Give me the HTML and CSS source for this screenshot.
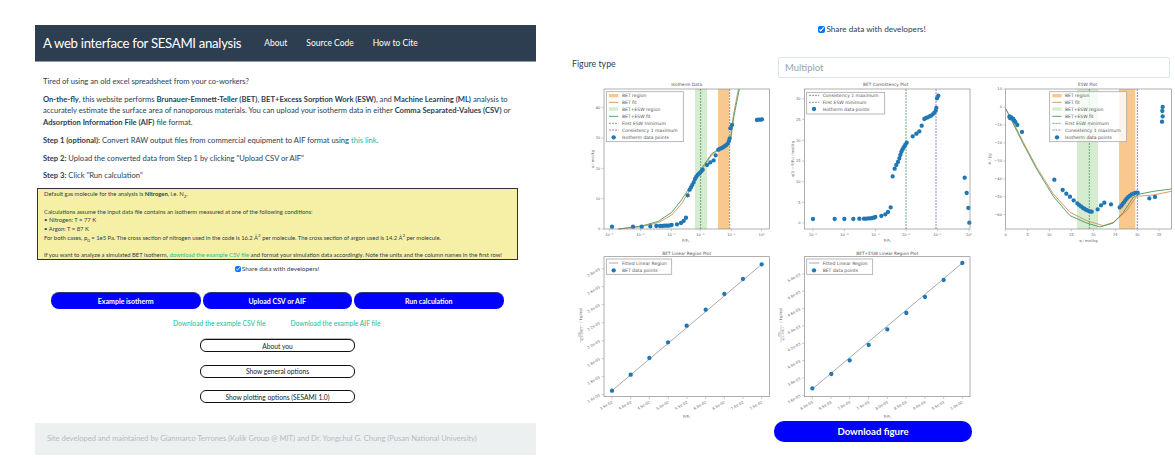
FILE: index.html

```html
<!DOCTYPE html>
<html>
<head>
  <meta charset="utf-8">
  <title>SESAMI</title>
  <link rel="stylesheet" href="styles.css">
</head>
<body>
  <div class="left">
    <div class="navbar">
      <span class="brand">A web interface for SESAMI analysis</span>
      <a class="navlink">About</a>
      <a class="navlink">Source Code</a>
      <a class="navlink">How to Cite</a>
    </div>

    <div class="intro">
      <p>Tired of using an old excel spreadsheet from your co-workers?</p>
      <p><b>On-the-fly</b>, this website performs <b>Brunauer-Emmett-Teller (BET)</b>, <b>BET+Excess Sorption Work (ESW)</b>, and <b>Machine Learning (ML)</b> analysis to accurately estimate the surface area of nanoporous materials. You can upload your isotherm data in either <b>Comma Separated-Values (CSV)</b> or <b>Adsorption Information File (AIF)</b> file format.</p>
      <p><b>Step 1 (optional):</b> Convert RAW output files from commercial equipment to AIF format using <a class="link">this link</a>.</p>
      <p><b>Step 2:</b> Upload the converted data from Step 1 by clicking "Upload CSV or AIF"</p>
      <p><b>Step 3:</b> Click "Run calculation"</p>
    </div>

    <div class="notice">
      Default gas molecule for the analysis is <b>Nitrogen</b>, i.e. N<sub>2</sub>.<br><br>
      Calculations assume the input data file contains an isotherm measured at one of the following conditions:<br>
      &bull; Nitrogen: T = 77 K<br>
      &bull; Argon: T = 87 K<br>
      For both cases, p<sub>0</sub> = 1e5 Pa. The cross section of nitrogen used in the code is 16.2 Å<sup>2</sup> per molecule. The cross section of argon used is 14.2 Å<sup>2</sup> per molecule.<br><br>
      If you want to analyze a simulated BET isotherm, <a class="link">download the example CSV file</a> and format your simulation data accordingly. Note the units and the column names in the first row!
    </div>

    <label class="share"><input type="checkbox" checked> Share data with developers!</label>

    <div class="actions">
      <button class="blue">Example isotherm</button>
      <button class="blue">Upload CSV or AIF</button>
      <button class="blue">Run calculation</button>
    </div>

    <div class="downloads">
      <a class="link">Download the example CSV file</a>
      <a class="link">Download the example AIF file</a>
    </div>

    <div class="options">
      <button class="outline first">About you</button>
      <button class="outline">Show general options</button>
      <button class="outline">Show plotting options (SESAMI 1.0)</button>
    </div>

    <div class="footer">Site developed and maintained by Gianmarco Terrones (Kulik Group @ MIT) and Dr. Yongchul G. Chung (Pusan National University)</div>
  </div>

  <div class="right">
    <label class="share top"><input type="checkbox" checked> Share data with developers!</label>

    <div class="figtype">
      <span class="figlabel">Figure type</span>
      <div class="select">Multiplot</div>
    </div>

    <div class="plots">
      <!-- isotherm -->
      <svg class="plot" viewBox="0 0 615 510">
        <rect class="r-or" x="459" y="30" width="33" height="420"/>
        <rect class="r-gr" x="390" y="30" width="36" height="420"/>
        <path class="v-gr" d="M407 30V450"/>
        <path class="v-pu" d="M494 30V450"/>
        <polyline class="c-or" points="160,450 230,443 280,431 320,408 350,374 380,324 410,274 440,228 470,207 495,186 505,110 520,30"/>
        <polyline class="c-gr" points="160,450 230,441 280,427 320,400 350,362 380,316 410,268 440,224 470,205 497,182 507,110 523,30"/>
        <path class="dots" d="M141 443h0M204 443h0M230 443h0M256 442h0M274 441h0M285 441h0M292 441h0M298 440h0M304 440h0M310 440h0M315 439h0M320 438h0M336 436h0M348 432h0M356 426h0M363 416h0M368 349h0M374 332h0M378 325h0M382 318h0M386 310h0M390 300h0M394 293h0M398 288h0M402 284h0M406 280h0M410 276h0M413 272h0M426 258h0M436 250h0M446 244h0M452 229h0M460 212h0M464 210h0M468 208h0M472 206h0M476 204h0M480 201h0M484 198h0M488 194h0M492 186h0M494 178h0M496 148h0M501 138h0M576 123h0M580 122h0M584 122h0M588 122h0M591 121h0"/>
        <rect class="frame" x="117" y="30" width="496" height="420"/>
        <path class="tick" d="M110 450h7M110 359h7M110 268h7M110 177h7M110 86h7M133 450v7M226 450v7M319 450v7M406 450v7M499 450v7M590 450v7"/>
        <g class="lab end"><text x="106" y="454">0</text><text x="106" y="363">10</text><text x="106" y="272">20</text><text x="106" y="181">30</text><text x="106" y="90">40</text></g>
        <g class="lab mid"><text x="133" y="471">10⁻⁵</text><text x="226" y="471">10⁻⁴</text><text x="319" y="471">10⁻³</text><text x="406" y="471">10⁻²</text><text x="499" y="471">10⁻¹</text><text x="590" y="471">10⁰</text></g>
        <text class="lab mid" x="362" y="490">P/P₀</text>
        <text class="lab mid" transform="translate(86 240) rotate(-90)">q / mol/kg</text>
        <text class="ttl" x="365" y="22">Isotherm Data</text>
        <rect class="legend" x="124" y="38" width="231" height="150"/>
        <rect class="r-or" x="132" y="45" width="28" height="10"/>
        <path class="c-or" d="M132 70h28"/>
        <rect class="r-gr" x="132" y="85" width="28" height="10"/>
        <path class="c-gr" d="M132 112h28"/>
        <path class="v-gr" d="M132 133h28"/>
        <path class="v-pu" d="M132 153h28"/>
        <path class="dots" d="M146 175h0"/>
        <g class="leg"><text x="171" y="54">BET region</text><text x="171" y="75">BET fit</text><text x="171" y="95">BET+ESW region</text><text x="171" y="116">BET+ESW fit</text><text x="171" y="137">First ESW minimum</text><text x="171" y="158">Consistency 1 maximum</text><text x="171" y="180">Isotherm data points</text></g>
      </svg>

      <!-- consistency -->
      <svg class="plot" viewBox="0 0 615 510">
        <path class="v-gr" d="M408 30V450"/>
        <path class="v-pu" d="M498 30V450"/>
        <path class="dots" d="M129 420h0M194 420h0M223 420h0M250 420h0M268 419h0M282 419h0M289 419h0M295 418h0M301 418h0M307 417h0M312 416h0M316 414h0M334 411h0M346 406h0M354 399h0M362 385h0M368 292h0M374 269h0M379 258h0M384 249h0M388 238h0M391 228h0M394 219h0M397 212h0M400 207h0M403 202h0M406 197h0M410 191h0M428 172h0M439 164h0M448 157h0M455 140h0M463 120h0M468 117h0M473 115h0M478 112h0M483 110h0M488 106h0M493 101h0M497 95h0M499 87h0M501 58h0M505 50h0M584 296h0M590 342h0M595 387h0M598 431h0"/>
        <rect class="frame" x="103" y="30" width="497" height="420"/>
        <path class="tick" d="M96 432h7M96 370h7M96 308h7M96 246h7M96 184h7M96 121h7M96 59h7M129 450v7M223 450v7M316 450v7M408 450v7M502 450v7M597 450v7"/>
        <g class="lab end"><text x="92" y="436">0</text><text x="92" y="374">5</text><text x="92" y="312">10</text><text x="92" y="250">15</text><text x="92" y="188">20</text><text x="92" y="125">25</text><text x="92" y="63">30</text></g>
        <g class="lab mid"><text x="129" y="471">10⁻⁵</text><text x="223" y="471">10⁻⁴</text><text x="316" y="471">10⁻³</text><text x="408" y="471">10⁻²</text><text x="502" y="471">10⁻¹</text><text x="597" y="471">10⁰</text></g>
        <text class="lab mid" x="352" y="490">P/P₀</text>
        <text class="lab mid" transform="translate(72 240) rotate(-90)">q(1 − P/P₀) / mol/kg</text>
        <text class="ttl" x="347" y="22">BET Consistency Plot</text>
        <rect class="legend" x="110" y="40" width="234" height="65"/>
        <path class="v-pu" d="M117 49h31"/>
        <path class="v-gr" d="M117 70h31"/>
        <path class="dots" d="M132 90h0"/>
        <g class="leg"><text x="158" y="54">Consistency 1 maximum</text><text x="158" y="75">First ESW minimum</text><text x="158" y="95">Isotherm data points</text></g>
      </svg>

      <!-- esw -->
      <svg class="plot" viewBox="15 0 600 510">
        <rect class="r-or" x="447" y="30" width="49" height="420"/>
        <rect class="r-gr" x="321" y="30" width="63" height="420"/>
        <path class="v-gr" d="M358 30V450"/>
        <path class="v-pu" d="M502 30V450"/>
        <polyline class="c-or" points="107,90 130,130 160,190 200,265 250,345 300,400 350,425 400,440 430,430 470,395 500,352 550,348 604,337"/>
        <polyline class="c-gr" points="107,88 130,135 160,195 200,270 250,352 300,410 350,432 390,444 430,432 460,400 490,355 510,345 550,337 604,330"/>
        <path class="dots" d="M118 113h0M119 116h0M120 113h0M122 118h0M124 115h0M127 118h0M130 120h0M133 125h0M136 129h0M142 138h0M156 159h0M253 302h0M278 333h0M289 344h0M300 353h0M311 364h0M322 373h0M327 378h0M333 382h0M338 386h0M343 389h0M348 392h0M352 394h0M356 396h0M360 397h0M365 398h0M383 391h0M393 379h0M403 371h0M423 376h0M449 385h0M454 380h0M458 375h0M462 370h0M466 364h0M470 359h0M475 354h0M480 350h0M485 346h0M490 344h0M495 342h0M500 341h0M503 341h0M538 358h0M555 354h0M576 128h0M578 112h0M577 96h0M578 84h0"/>
        <rect class="frame" x="107" y="30" width="497" height="420"/>
        <path class="tick" d="M100 30h7M100 84h7M100 138h7M100 192h7M100 246h7M100 300h7M100 353h7M100 407h7M107 450v7M173 450v7M238 450v7M304 450v7M370 450v7M436 450v7M502 450v7M567 450v7"/>
        <g class="lab end"><text x="96" y="34">10</text><text x="96" y="88">0</text><text x="96" y="142">−10</text><text x="96" y="196">−20</text><text x="96" y="250">−30</text><text x="96" y="304">−40</text><text x="96" y="357">−50</text><text x="96" y="411">−60</text></g>
        <g class="lab mid"><text x="107" y="471">0</text><text x="173" y="471">5</text><text x="238" y="471">10</text><text x="304" y="471">15</text><text x="370" y="471">20</text><text x="436" y="471">25</text><text x="502" y="471">30</text><text x="567" y="471">35</text></g>
        <text class="lab mid" x="355" y="488">q / mol/kg</text>
        <text class="lab mid" transform="translate(62 240) rotate(-90)">Φ / J/g</text>
        <text class="ttl" x="353" y="22">ESW Plot</text>
        <rect class="legend" x="239" y="38" width="231" height="150"/>
        <rect class="r-or" x="247" y="45" width="28" height="10"/>
        <path class="c-or" d="M247 70h28"/>
        <rect class="r-gr" x="247" y="85" width="28" height="10"/>
        <path class="c-gr" d="M247 112h28"/>
        <path class="v-gr" d="M247 133h28"/>
        <path class="v-pu" d="M247 153h28"/>
        <path class="dots" d="M261 175h0"/>
        <g class="leg"><text x="285" y="54">BET region</text><text x="285" y="75">BET fit</text><text x="285" y="95">BET+ESW region</text><text x="285" y="116">BET+ESW fit</text><text x="285" y="137">First ESW minimum</text><text x="285" y="158">Consistency 1 maximum</text><text x="285" y="180">Isotherm data points</text></g>
      </svg>

      <!-- bet linear -->
      <svg class="plot" viewBox="0 -15 615 516">
        <path class="fit" d="M141 410L590 31"/>
        <path class="dots" d="M141 410h0M197 362h0M253 312h0M309 265h0M365 215h0M422 167h0M478 120h0M534 75h0M590 31h0"/>
        <rect class="frame" x="117" y="8" width="496" height="420"/>
        <path class="tick" d="M110 422h7M110 368h7M110 314h7M110 260h7M110 206h7M110 152h7M110 98h7M110 44h7M141 428v7M197 428v7M253 428v7M310 428v7M366 428v7M422 428v7M478 428v7M534 428v7M590 428v7"/>
        <g class="lab end">
          <text transform="translate(106 426) rotate(-30)">1.4e-03</text><text transform="translate(106 372) rotate(-30)">1.6e-03</text><text transform="translate(106 318) rotate(-30)">1.8e-03</text><text transform="translate(106 264) rotate(-30)">2.0e-03</text><text transform="translate(106 210) rotate(-30)">2.2e-03</text><text transform="translate(106 156) rotate(-30)">2.4e-03</text><text transform="translate(106 102) rotate(-30)">2.6e-03</text><text transform="translate(106 48) rotate(-30)">2.8e-03</text>
          <text transform="translate(144 447) rotate(-30)">3.5e-02</text><text transform="translate(200 447) rotate(-30)">4.0e-02</text><text transform="translate(256 447) rotate(-30)">4.5e-02</text><text transform="translate(313 447) rotate(-30)">5.0e-02</text><text transform="translate(369 447) rotate(-30)">5.5e-02</text><text transform="translate(425 447) rotate(-30)">6.0e-02</text><text transform="translate(481 447) rotate(-30)">6.5e-02</text><text transform="translate(537 447) rotate(-30)">7.0e-02</text><text transform="translate(593 447) rotate(-30)">7.5e-02</text>
        </g>
        <text class="lab mid" x="365" y="491">P/P₀</text>
        <g class="lab" transform="translate(47 240) rotate(-90)">
          <text class="frac mid" y="-3">P/P₀</text>
          <path class="tick" d="M-26 0h52"/>
          <text class="frac mid" y="8">q(1−P/P₀)</text>
          <text x="34" y="3">/ kg/mol</text>
        </g>
        <text class="ttl" x="365" y="2">BET Linear Region Plot</text>
        <rect class="legend" x="124" y="15" width="196" height="46"/>
        <path class="fit" d="M132 27h28"/>
        <path class="dots" d="M146 49h0"/>
        <g class="leg"><text x="171" y="32">Fitted Linear Region</text><text x="171" y="54">BET data points</text></g>
      </svg>

      <!-- bet+esw linear -->
      <svg class="plot" viewBox="0 -15 615 516">
        <path class="fit" d="M127 405L577 27"/>
        <path class="dots" d="M127 403h0M184 360h0M239 319h0M296 273h0M352 226h0M409 177h0M465 129h0M521 78h0M577 27h0"/>
        <rect class="frame" x="103" y="8" width="497" height="420"/>
        <path class="tick" d="M96 424h7M96 372h7M96 320h7M96 268h7M96 216h7M96 164h7M96 112h7M96 60h7M127 428v7M183 428v7M239 428v7M296 428v7M352 428v7M408 428v7M465 428v7M521 428v7M577 428v7"/>
        <g class="lab end">
          <text transform="translate(92 428) rotate(-30)">3.6e-03</text><text transform="translate(92 376) rotate(-30)">3.8e-03</text><text transform="translate(92 324) rotate(-30)">4.0e-03</text><text transform="translate(92 272) rotate(-30)">4.2e-03</text><text transform="translate(92 220) rotate(-30)">4.4e-03</text><text transform="translate(92 168) rotate(-30)">4.6e-03</text><text transform="translate(92 116) rotate(-30)">4.8e-03</text><text transform="translate(92 64) rotate(-30)">5.0e-03</text>
          <text transform="translate(130 447) rotate(-30)">6.0e-03</text><text transform="translate(186 447) rotate(-30)">6.5e-03</text><text transform="translate(242 447) rotate(-30)">7.0e-03</text><text transform="translate(299 447) rotate(-30)">7.5e-03</text><text transform="translate(355 447) rotate(-30)">8.0e-03</text><text transform="translate(411 447) rotate(-30)">8.5e-03</text><text transform="translate(468 447) rotate(-30)">9.0e-03</text><text transform="translate(524 447) rotate(-30)">9.5e-03</text><text transform="translate(580 447) rotate(-30)">1.0e-02</text>
        </g>
        <text class="lab mid" x="352" y="491">P/P₀</text>
        <g class="lab" transform="translate(33 240) rotate(-90)">
          <text class="frac mid" y="-3">P/P₀</text>
          <path class="tick" d="M-26 0h52"/>
          <text class="frac mid" y="8">q(1−P/P₀)</text>
          <text x="34" y="3">/ kg/mol</text>
        </g>
        <text class="ttl" x="352" y="2">BET+ESW Linear Region Plot</text>
        <rect class="legend" x="110" y="15" width="198" height="46"/>
        <path class="fit" d="M117 27h31"/>
        <path class="dots" d="M132 49h0"/>
        <g class="leg"><text x="158" y="32">Fitted Linear Region</text><text x="158" y="54">BET data points</text></g>
      </svg>

      <button class="download">Download figure</button>
    </div>
  </div>
</body>
</html>
```

FILE: styles.css

```css
html, body {
  margin: 0;
  padding: 0;
  height: 100%;
}
body {
  display: flex;
  background-color: #fff;
  color: #2c3e50;
  font-family: Lato, "Open Sans", sans-serif;
  overflow: hidden;
}
a {
  text-decoration: none;
}
.link {
  color: #18bc9c;
}

/* left column */
.left {
  width: 501px;
  margin-left: 35px;
  padding-top: 25px;
}
.navbar {
  display: flex;
  align-items: center;
  height: 36px;
  padding-left: 8px;
  background-color: #2c3e50;
  border-bottom: 1px solid #8d99a6;
  color: #fff;
}
.brand {
  font-size: 13.2px;
  letter-spacing: -0.3px;
  margin-right: 23px;
}
.navlink {
  font-size: 8.5px;
  margin-right: 19px;
}
.intro {
  padding: 14px 20px 0 8px;
  font-size: 7.6px;
  line-height: 11.6px;
}
.intro p {
  margin: 0 0 6.2px;
}
.notice {
  width: 473px;
  height: 69px;
  margin: 6px 0 0 2px;
  padding: 1px 0 0 6px;
  background-color: #f6efa6;
  border: 1px solid #333;
  font-size: 5.85px;
  line-height: 8.7px;
  white-space: nowrap;
  overflow: hidden;
}
.notice sub, .notice sup {
  font-size: 4.5px;
  line-height: 0;
}
.share {
  display: flex;
  align-items: center;
  justify-content: center;
  gap: 1px;
  width: 480px;
  margin: 3px 0 0 2px;
  font-size: 6.4px;
  line-height: 12px;
}
.share input {
  width: 6px;
  height: 6px;
  margin: 0;
}
.actions {
  display: flex;
  gap: 2px;
  margin: 17px 0 0 16px;
}
.blue {
  width: 149.5px;
  height: 17px;
  padding: 0;
  background-color: #00f;
  border: 0;
  border-top: 1px solid #333a66;
  border-radius: 8px;
  color: #fff;
  font-family: inherit;
  font-size: 7px;
  font-weight: bold;
}
.downloads {
  display: flex;
  gap: 25px;
  margin: 8px 0 0 138px;
  font-size: 6.7px;
  line-height: 12px;
}
.options {
  display: flex;
  flex-direction: column;
  gap: 12.5px;
  margin: 10px 0 0 165px;
}
.outline {
  width: 155px;
  height: 13px;
  padding: 0;
  background-color: #fff;
  border: 1px solid #111;
  border-radius: 6px;
  color: #222;
  font-family: inherit;
  font-size: 6.7px;
}
.outline.first {
  box-shadow: 0 -1px 0 #bbb;
}
.footer {
  height: 32px;
  margin-top: 20px;
  padding-left: 12px;
  background-color: #ecf0f1;
  color: #b4bcc2;
  font-size: 7.55px;
  line-height: 32px;
  white-space: nowrap;
}

/* right column */
.right {
  width: 610px;
  margin-left: 29px;
}
.share.top {
  width: 100%;
  margin: 23px 0 0 2px;
  font-size: 8.2px;
}
.share.top input {
  width: 7px;
  height: 7px;
}
.figtype {
  display: flex;
  align-items: flex-start;
  margin-top: 22px;
  padding-left: 7px;
}
.figlabel {
  width: 206px;
  font-size: 8.8px;
  line-height: 14px;
}
.select {
  width: 384px;
  height: 19px;
  padding-left: 6px;
  border: 1px solid #dce4ec;
  border-radius: 2px;
  color: #95a5a6;
  font-size: 9.5px;
  line-height: 19px;
}
.plots {
  display: grid;
  grid-template-columns: 205px 205px 200px;
  grid-template-rows: 170px 172px auto;
  margin-top: 1px;
}
.plot {
  display: block;
  width: 100%;
  height: 100%;
}
.download {
  grid-column: 2;
  width: 198px;
  height: 21px;
  margin-left: 4px;
  padding: 0;
  background-color: #00f;
  border: 0;
  border-radius: 10px;
  color: #fff;
  font-family: inherit;
  font-size: 9.6px;
  font-weight: bold;
}

/* plot parts */
.plot text {
  font-family: "DejaVu Sans", sans-serif;
}
.frame {
  fill: none;
  stroke: #888;
  stroke-width: 2;
}
.tick {
  fill: none;
  stroke: #999;
  stroke-width: 1.5;
}
.lab {
  fill: #666;
  font-size: 11px;
}
.frac {
  font-size: 8px;
}
.end {
  text-anchor: end;
}
.mid {
  text-anchor: middle;
}
.ttl {
  fill: #555;
  font-size: 13px;
  text-anchor: middle;
}
.legend {
  fill: #fff;
  fill-opacity: 0.8;
  stroke: #aaa;
  stroke-width: 2.5;
}
.leg {
  fill: #555;
  font-size: 13.5px;
}
.r-or {
  fill: #f8c88f;
}
.r-gr {
  fill: #d5ecd0;
}
.v-gr, .v-pu {
  fill: none;
  stroke-width: 2.5;
  stroke-dasharray: 6 3;
}
.v-gr {
  stroke: #4c9c5c;
}
.v-pu {
  stroke: #8a63c0;
}
.c-or, .c-gr {
  fill: none;
  stroke-width: 2.5;
}
.c-or {
  stroke: #c98a4a;
}
.c-gr {
  stroke: #3d8f4f;
}
.dots {
  fill: none;
  stroke: #1f77b4;
  stroke-width: 13;
  stroke-linecap: round;
}
.fit {
  fill: none;
  stroke: #aaa;
  stroke-width: 3;
}
```
